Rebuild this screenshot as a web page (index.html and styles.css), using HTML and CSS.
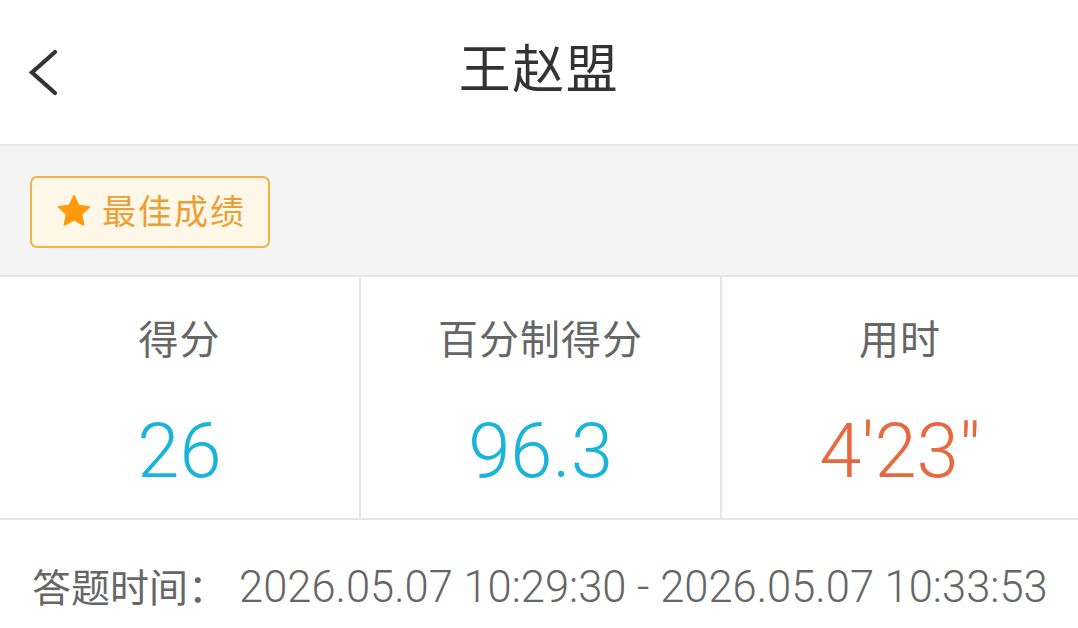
FILE: index.html
```html
<!DOCTYPE html>
<html lang="zh-CN">
<head>
<meta charset="utf-8">
<title>王赵盟</title>
<link rel="stylesheet" href="styles.css">
</head>
<body>
<div class="page">
  <header class="topbar">
    <div class="back">
      <svg width="32" height="48" viewBox="0 0 32 48" aria-hidden="true">
        <path d="M28 3 L5 23.5 L28 44" fill="none" stroke="#333" stroke-width="4.2" stroke-linecap="round" stroke-linejoin="miter"/>
      </svg>
    </div>
    <h1 class="title">王赵盟</h1>
    <div class="spacer"></div>
  </header>

  <section class="best-wrap">
    <div class="badge">
      <svg class="star" width="36" height="34" viewBox="0 0 24 23" aria-hidden="true">
        <path d="M12 1.2l3.1 6.6 7.2.9-5.3 5 1.4 7.2L12 17.4l-6.4 3.5 1.4-7.2-5.3-5 7.2-.9z" fill="#ff9a0a" stroke="#ff9a0a" stroke-width="1.2" stroke-linejoin="round"/>
      </svg>
      <span class="badge-text">最佳成绩</span>
    </div>
  </section>

  <section class="stats">
    <div class="stat">
      <div class="label">得分</div>
      <div class="value blue">26</div>
    </div>
    <div class="stat">
      <div class="label">百分制得分</div>
      <div class="value blue">96.3</div>
    </div>
    <div class="stat">
      <div class="label">用时</div>
      <div class="value orange">4'23"</div>
    </div>
  </section>

  <section class="footer">
    <span class="ftitle">答题时间：</span><span class="ftime">2026.05.07 10:29:30 - 2026.05.07 10:33:53</span>
  </section>
</div>
</body>
</html>
```

FILE: styles.css
```css
* { box-sizing: border-box; margin: 0; padding: 0; }
html, body { background: #fff; }
body {
  font-family: Roboto, "Noto Sans CJK SC", sans-serif;
  color: #333;
}
.page { width: 1078px; height: 628px; overflow: hidden; }

.topbar {
  height: 146px;
  display: grid;
  grid-template-columns: 1fr auto 1fr;
  align-items: center;
  border-bottom: 2px solid #e8e8e8;
}
.back { padding-left: 27px; padding-top: 2px; display: flex; align-items: center; }
.back svg { display: block; }
.title {
  font-size: 52px;
  font-weight: 400;
  color: #333;
  line-height: 60px;
  letter-spacing: 1.5px;
  padding-bottom: 2px;
}

.best-wrap {
  background: #f4f4f4;
  height: 131px;
  padding: 30px 0 0 30px;
  border-bottom: 2px solid #e6e6e6;
}
.badge {
  width: 240px;
  height: 72px;
  border: 2px solid #f1b24a;
  border-radius: 7px;
  background: #fff8e8;
  display: flex;
  align-items: center;
  padding-left: 24px;
  gap: 10px;
}
.star { display: block; margin-top: -2px; }
.badge-text {
  font-size: 34px;
  color: #eaa035;
  line-height: 40px;
  letter-spacing: 2px;
}

.stats {
  display: grid;
  grid-template-columns: 359px 361px 1fr;
  height: 243px;
  border-bottom: 2px solid #e6e6e6;
}
.stat {
  display: flex;
  flex-direction: column;
  align-items: center;
  border-left: 2px solid #e6e6e6;
}
.stat:first-child { border-left: none; }
.label {
  margin-top: 39px;
  font-size: 40px;
  line-height: 50px;
  color: #666;
  letter-spacing: 1px;
}
.value {
  margin-top: 45px;
  font-size: 76px;
  line-height: 80px;
  font-weight: 350;
}
.blue { color: #1ab4d8; }
.orange { color: #e8693f; }

.footer {
  padding: 43px 0 0 32px;
  line-height: 50px;
  color: #666;
  white-space: nowrap;
}
.ftitle { font-size: 39px; margin-right: 12px; }
.ftime { font-size: 43.5px; font-weight: 350; }
```
